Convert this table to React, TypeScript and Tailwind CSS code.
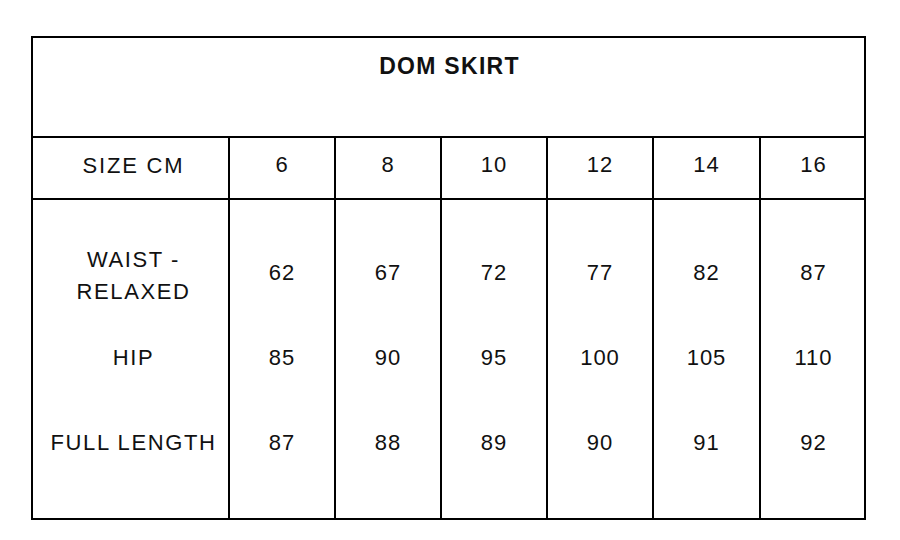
const sizes = ["6", "8", "10", "12", "14", "16"];

const rows = [
  { label: ["WAIST -", "RELAXED"], values: ["62", "67", "72", "77", "82", "87"] },
  { label: ["HIP"], values: ["85", "90", "95", "100", "105", "110"] },
  { label: ["FULL LENGTH"], values: ["87", "88", "89", "90", "91", "92"] },
];

const cols = "grid grid-cols-[195px_106px_106px_106px_106px_107px_107px]";

export default function App() {
  return (
    <div
      className="w-[900px] h-[540px] bg-white text-[#111] pt-[36px] pl-[31px]"
      style={{ fontFamily: '"Liberation Sans", Arial, sans-serif' }}
    >
      <div className="w-[835px] h-[484px] border-2 border-black flex flex-col">
        {/* title */}
        <div className="h-[98px] flex justify-center pt-[14px] pl-[2px] leading-[28px] text-[23px] font-bold tracking-[1.3px]">
          DOM SKIRT
        </div>

        {/* header */}
        <div className={`${cols} h-[62px] border-t-2 border-black`}>
          <div className="flex items-center justify-center pl-[6px] text-[22px] tracking-[1.8px] pb-[5px]">
            SIZE CM
          </div>
          {sizes.map((s) => (
            <div
              key={s}
              className="border-l-2 border-black flex items-center justify-center text-[22px] tracking-[1px] pb-[7px]"
            >
              {s}
            </div>
          ))}
        </div>

        {/* body */}
        <div className={`${cols} flex-1 border-t-2 border-black`}>
          <div className="flex flex-col pt-[30px] pl-[6px]">
            {rows.map((r) => (
              <div
                key={r.label[0]}
                className={`h-[85px] flex flex-col items-center justify-center text-[22px] tracking-[1.6px] leading-[32px] ${
                  r.label.length > 1 ? "pt-[6px]" : ""
                }`}
              >
                {r.label.map((l) => (
                  <span key={l}>{l}</span>
                ))}
              </div>
            ))}
          </div>
          {sizes.map((s, i) => (
            <div key={s} className="border-l-2 border-black flex flex-col pt-[30px]">
              {rows.map((r) => (
                <div
                  key={r.label[0]}
                  className="h-[85px] flex items-center justify-center text-[22px] tracking-[1px]"
                >
                  {r.values[i]}
                </div>
              ))}
            </div>
          ))}
        </div>
      </div>
    </div>
  );
}
